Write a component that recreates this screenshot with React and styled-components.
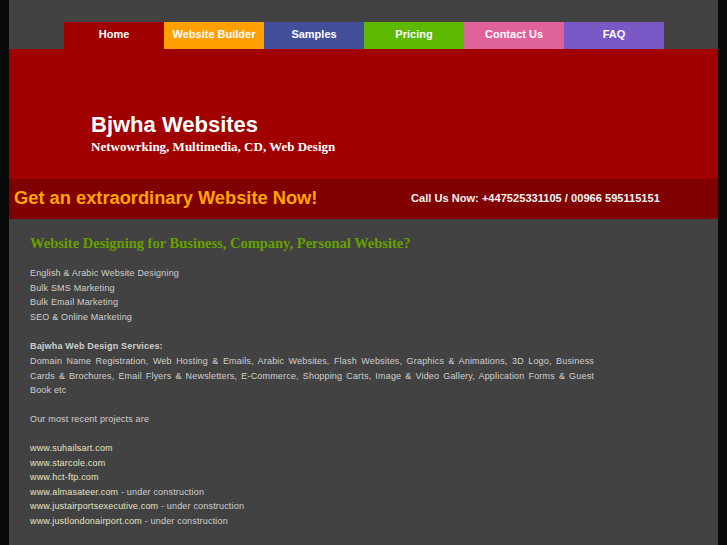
import React from "react"
import styled, { createGlobalStyle } from "styled-components"

const GlobalStyle = createGlobalStyle`
  html, body {
    margin: 0;
    padding: 0;
    background: #0a0a0a;
  }
`

const Page = styled.div`
  width: 709px;
  margin-left: 9px;
  background: #424242;
  min-height: 545px;
  font-family: "Liberation Sans", Arial, sans-serif;
`

const Nav = styled.ul`
  list-style: none;
  margin: 0;
  padding: 22px 0 0 55px;
  display: flex;
`

const Tab = styled.li`
  width: 100px;
  height: 27px;
  background: ${props => props.color};
  color: #fff;
  font-size: 11px;
  font-weight: bold;
  display: flex;
  align-items: center;
  justify-content: center;
  padding-bottom: 3px;
  box-sizing: border-box;
`

const Header = styled.header`
  background: #a00000;
  height: 130px;
  padding: 63px 0 0 82px;
  box-sizing: border-box;
`

const Title = styled.h1`
  margin: 0;
  color: #fff;
  font-size: 22px;
  font-weight: bold;
  line-height: 26px;
`

const Subtitle = styled.div`
  margin-top: 1px;
  color: #fff;
  font-family: "Liberation Serif", "Times New Roman", serif;
  font-size: 13px;
  font-weight: bold;
`

const CallBar = styled.div`
  background: #800000;
  height: 40px;
  display: flex;
  align-items: center;
  padding: 0 0 3px 5px;
  box-sizing: border-box;
`

const Slogan = styled.div`
  color: #ffa500;
  font-size: 18.3px;
  font-weight: bold;
  width: 397px;
`

const Phone = styled.div`
  color: #f2f2f2;
  font-size: 11.1px;
  font-weight: bold;
`

const Content = styled.main`
  padding: 14px 124px 20px 21px;
  color: #d0d0d0;
  font-size: 9px;
  letter-spacing: 0.18px;
  line-height: 14.5px;
`

const Heading = styled.h2`
  margin: 0 0 13px;
  color: #66a000;
  font-family: "Liberation Serif", "Times New Roman", serif;
  font-size: 14.5px;
  font-weight: bold;
  letter-spacing: 0;
  line-height: 20px;
`

const Para = styled.p`
  margin: 0 0 14.5px;
  text-align: justify;
`

const Strong = styled.b`
  display: block;
  font-weight: bold;
  margin-bottom: 1px;
`

const Site = styled.span`
  color: #e4e4c0;
`

const tabs = [
  ["Home", "#a00000"],
  ["Website Builder", "#ffa000"],
  ["Samples", "#444f9c"],
  ["Pricing", "#5cb800"],
  ["Contact Us", "#e0629b"],
  ["FAQ", "#7a58c6"],
]

const projects = [
  ["www.suhailsart.com"],
  ["www.starcole.com"],
  ["www.hct-ftp.com"],
  ["www.almasateer.com", true],
  ["www.justairportsexecutive.com", true],
  ["www.justlondonairport.com", true],
]

export default function App() {
  return (
    <>
      <GlobalStyle />
      <Page>
        <Nav>
          {tabs.map(([label, color]) => (
            <Tab key={label} color={color}>{label}</Tab>
          ))}
        </Nav>
        <Header>
          <Title>Bjwha Websites</Title>
          <Subtitle>Netwowrking, Multimedia, CD, Web Design</Subtitle>
        </Header>
        <CallBar>
          <Slogan>Get an extraordinary Website Now!</Slogan>
          <Phone>Call Us Now: +447525331105 / 00966 595115151</Phone>
        </CallBar>
        <Content>
          <Heading>Website Designing for Business, Company, Personal Website?</Heading>
          <Para>
            English &amp; Arabic Website Designing<br />
            Bulk SMS Marketing<br />
            Bulk Email Marketing<br />
            SEO &amp; Online Marketing
          </Para>
          <Para>
            <Strong>Bajwha Web Design Services:</Strong>
            Domain Name Registration, Web Hosting &amp; Emails, Arabic Websites, Flash Websites, Graphics &amp; Animations, 3D Logo, Business Cards &amp; Brochures, Email Flyers &amp; Newsletters, E-Commerce, Shopping Carts, Image &amp; Video Gallery, Application Forms &amp; Guest Book etc
          </Para>
          <Para>Our most recent projects are</Para>
          <Para>
            {projects.map(([site, wip]) => (
              <React.Fragment key={site}>
                <Site>{site}</Site>{wip && " - under construction"}<br />
              </React.Fragment>
            ))}
          </Para>
        </Content>
      </Page>
    </>
  )
}
